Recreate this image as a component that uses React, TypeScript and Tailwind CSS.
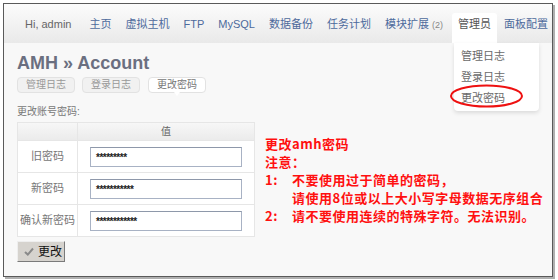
import React from "react";

const navItems = [
  { t: "主页" },
  { t: "虚拟主机" },
  { t: "FTP" },
  { t: "MySQL" },
  { t: "数据备份" },
  { t: "任务计划" },
  { t: "模块扩展", extra: "(2)" },
];

function Row({ label, value }: { label: string; value: string }) {
  return (
    <div className="flex h-[32px] border-t border-[#e6e6e6]">
      <div className="w-[60px] shrink-0 border-r border-[#e6e6e6] flex items-center justify-center text-[11px] text-[#777]">
        {label}
      </div>
      <div className="flex-1 flex items-center pl-[12px]">
        <div className="w-[152px] h-[20px] border border-[#a8b2c4] border-t-[#8e98aa] bg-white flex items-center pl-[5px] text-[10px] font-bold text-[#222] tracking-[-0.5px] leading-none pt-[3px]">
          {value}
        </div>
      </div>
    </div>
  );
}

export default function App() {
  return (
    <div
      className="relative w-[558px] h-[280px] bg-white overflow-hidden"
      style={{ fontFamily: '"Liberation Sans", "Noto Sans CJK SC", sans-serif' }}
    >
      <div className="absolute left-[3px] top-[3px] w-[550px] h-[274px] border border-[#5a5a5a] shadow-[2px_2px_0_#b0b0b0] bg-[#f8f8f8] flex flex-col overflow-hidden">
        {/* nav */}
        <div className="h-[39px] shrink-0 bg-gradient-to-b from-[#fcfcfc] to-[#e9e9e9] flex items-end pl-[14px] text-[11px] whitespace-nowrap">
          <div className="shrink-0 h-[30px] pt-[4px] px-[7px] text-[#666] leading-[14px]">Hi, admin</div>
          <div className="shrink-0 w-[4px]" />
          {navItems.map((n) => (
            <div key={n.t} className="shrink-0 h-[30px] pt-[4px] px-[7px] text-[#4d6a9c] leading-[14px]">
              {n.t}
              {n.extra && <span className="text-[9px] text-[#888] ml-[3px]">{n.extra}</span>}
            </div>
          ))}
          <div className="shrink-0 h-[30px] pt-[4px] px-[6px] ml-[2px] bg-white rounded-t-[3px] text-[#555] leading-[14px]">管理员</div>
          <div className="shrink-0 h-[30px] pt-[4px] px-[7px] text-[#4d6a9c] leading-[14px]">面板配置</div>
        </div>

        {/* content */}
        <div className="pl-[13px] pt-[10px]">
          <div className="text-[18px] leading-[20px] font-bold text-[#6b6f80]">AMH » Account</div>
          <div className="flex gap-[6px] mt-[4px]">
            <div className="h-[16px] px-[8px] rounded-[4px] border border-[#e2e2e2] bg-[#f1f1f1] text-[10px] leading-[14px] text-[#999]">管理日志</div>
            <div className="h-[16px] px-[8px] rounded-[4px] border border-[#e2e2e2] bg-[#f1f1f1] text-[10px] leading-[14px] text-[#999] ml-[1px]">登录日志</div>
            <div className="relative h-[16px] px-[8px] rounded-[4px] border border-[#e2e2e2] bg-white text-[10px] leading-[14px] text-[#777] ml-[2px]">
              更改密码
              <div className="absolute left-1/2 -bottom-[4px] -ml-[3px] w-0 h-0 border-l-[3px] border-r-[3px] border-t-[4px] border-l-transparent border-r-transparent border-t-white" />
            </div>
          </div>
          <div className="mt-[12px] text-[10px] leading-[14px] text-[#777]">更改账号密码:</div>
          <div className="flex mt-[3px]">
            <div className="w-[238px] shrink-0">
              <div className="border border-[#e6e6e6] bg-white">
                <div className="flex h-[17px] bg-gradient-to-b from-[#f7f7f7] to-[#ebebeb]">
                  <div className="w-[60px] shrink-0 border-r border-[#e6e6e6]" />
                  <div className="flex-1 text-center text-[10px] leading-[17px] text-[#666]">值</div>
                </div>
                <Row label="旧密码" value="*********" />
                <Row label="新密码" value="***********" />
                <Row label="确认新密码" value="************" />
              </div>
              <div className="mt-[4px] w-[48px] h-[21px] bg-[#d6d3ce] border border-[#eeeeee] border-r-[#7a7a7a] border-b-[#7a7a7a] flex items-center pl-[6px] gap-[4px]">
                <svg width="10" height="9" viewBox="0 0 10 9">
                  <path d="M1 5 L3.8 7.6 L9 1.5" fill="none" stroke="#8a8a8a" strokeWidth="2" />
                </svg>
                <span className="text-[12px] leading-[14px] text-[#111]">更改</span>
              </div>
            </div>
            <div
              className="ml-[10px] mt-[13px] text-[13px] tracking-[0.5px] leading-[18px] font-semibold text-[#ff1010]"
              style={{ fontFamily: '"Noto Sans CJK SC", sans-serif' }}
            >
              <div>更改amh密码</div>
              <div>注意：</div>
              <div className="flex">
                <span className="w-[27px] shrink-0">1:</span>
                <div>
                  <div>不要使用过于简单的密码，</div>
                  <div className="whitespace-nowrap">请使用8位或以上大小写字母数据无序组合</div>
                </div>
              </div>
              <div className="flex">
                <span className="w-[27px] shrink-0">2:</span>
                <div>请不要使用连续的特殊字符。无法识别。</div>
              </div>
            </div>
          </div>
        </div>
      </div>

      {/* dropdown */}
      <div className="absolute left-[454px] top-[43px] w-[85px] h-[68px] bg-white rounded-b-[4px] shadow-[0_2px_4px_rgba(0,0,0,0.12)] pl-[7px] pt-[3px] text-[11px] text-[#6a6a6a] leading-[21px]">
        <div>管理日志</div>
        <div>登录日志</div>
        <div>更改密码</div>
      </div>
      <svg className="absolute left-[449px] top-[83px]" width="75" height="26" viewBox="0 0 75 26">
        <ellipse cx="37.5" cy="13" rx="35.5" ry="10.5" fill="none" stroke="#ee1111" strokeWidth="2" />
      </svg>
    </div>
  );
}
